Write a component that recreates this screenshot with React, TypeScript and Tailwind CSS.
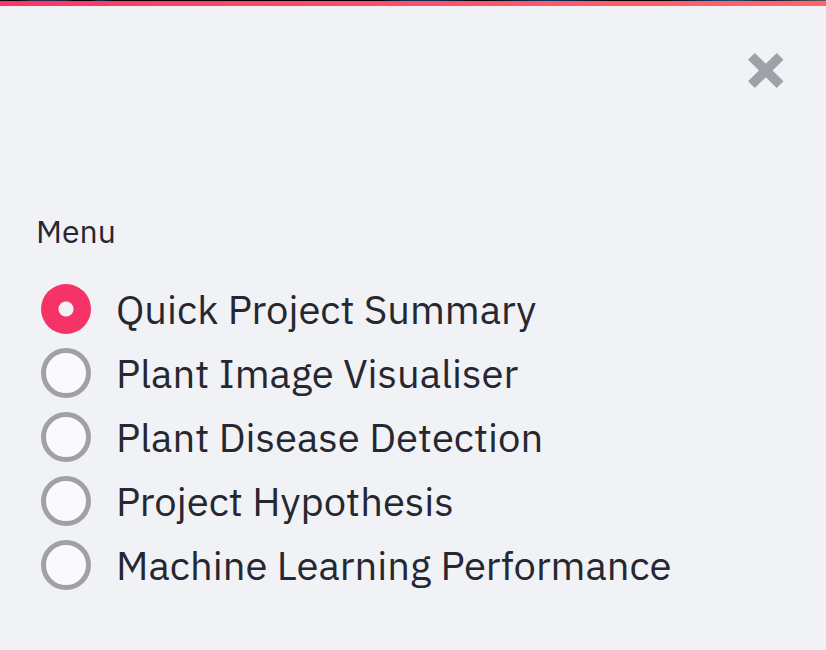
import { useState } from "react";

const pages = [
  "Quick Project Summary",
  "Plant Image Visualiser",
  "Plant Disease Detection",
  "Project Hypothesis",
  "Machine Learning Performance",
];

function CloseIcon() {
  return (
    <svg viewBox="0 0 36 36" className="size-9" aria-hidden="true">
      <path d="M3.4 3.4 32.1 31.6M32.1 3.4 3.4 31.6" fill="none" stroke="currentColor" strokeWidth="9.6" />
    </svg>
  );
}

export default function App() {
  const [page, setPage] = useState(pages[0]);

  return (
    <aside className="min-h-screen bg-[#f0f2f6] font-['IBM_Plex_Sans','Noto_Sans',sans-serif] text-[#262730]">
      <div className="h-px bg-[linear-gradient(to_right,#1a1210,#000_2%,#2a2f4e_4%,#1c2444_8%,#000_9%,#000_11%,#123058_12%,#000_14%,#000_46%,#063058_49%,#063058_53%,#000_58%,#053a66_66%,#032448_70%,#000_74%,#000_80%,#0a3866_86%,#1c5070_89%,#101830_93%,#6a5a5a)]" />
      <div className="h-[5px] bg-linear-to-r from-[#fa3468] to-[#ff666b]" />
      <header className="flex justify-end px-[42px] pt-[47px]">
        <button type="button" aria-label="Close menu" className="text-[#a0a1a8]">
          <CloseIcon />
        </button>
      </header>
      <div role="radiogroup" aria-labelledby="menu-title" className="px-9 pt-[118px] pb-7">
        <p id="menu-title" className="mb-[22px] text-[32px] leading-12">
          Menu
        </p>
        <div className="flex flex-col">
          {pages.map((name) => (
            <label key={name} className="flex h-16 cursor-pointer items-center gap-[25px] pl-[5px] text-[40px] whitespace-nowrap">
              <input
                type="radio"
                name="page"
                value={name}
                checked={page === name}
                onChange={() => setPage(name)}
                className="size-[50px] shrink-0 appearance-none rounded-full border-[5px] border-[#a0a1a8] bg-[#fafafc] checked:border-0 checked:bg-[radial-gradient(circle,#f0f2f6_7px,#f63366_8px)]"
              />
              {name}
            </label>
          ))}
        </div>
      </div>
    </aside>
  );
}
